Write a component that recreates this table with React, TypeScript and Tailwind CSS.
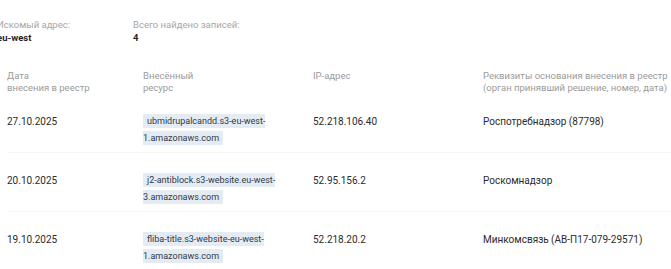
import React from "react";

const rows = [
  {
    date: "27.10.2025",
    res1: "ubmidrupalcandd.s3-eu-west-",
    res2: "1.amazonaws.com",
    ip: "52.218.106.40",
    org: "Роспотребнадзор (87798)",
  },
  {
    date: "20.10.2025",
    res1: "j2-antiblock.s3-website.eu-west-",
    res2: "3.amazonaws.com",
    ip: "52.95.156.2",
    org: "Роскомнадзор",
  },
  {
    date: "19.10.2025",
    res1: "fliba-title.s3-website-eu-west-",
    res2: "1.amazonaws.com",
    ip: "52.218.20.2",
    org: "Минкомсвязь (АВ-П17-079-29571)",
  },
];

export default function App() {
  return (
    <div
      className="w-[671px] h-[269px] overflow-hidden bg-white text-[#2b2b2b]"
      style={{ fontFamily: "Roboto, 'Noto Sans', sans-serif" }}
    >
      <div className="flex pt-[18px] ml-[-3px]">
        <div className="w-[136px]">
          <div className="text-[9.5px] leading-[13px] text-[#a6a6a6]">Искомый адрес:</div>
          <div className="text-[9.5px] leading-[13px] font-bold text-[#1f1f1f]">eu-west</div>
        </div>
        <div>
          <div className="text-[9.5px] leading-[13px] text-[#a6a6a6]">Всего найдено записей:</div>
          <div className="text-[9.5px] leading-[13px] font-bold text-[#1f1f1f]">4</div>
        </div>
      </div>

      <div className="mt-[26px] pl-[7px]">
        <div className="grid grid-cols-[136px_170px_170px_1fr] text-[9.5px] leading-[12px] text-[#9a9a9a] whitespace-nowrap">
          <div>
            Дата
            <br />
            внесения в реестр
          </div>
          <div>
            Внесённый
            <br />
            ресурс
          </div>
          <div>IP-адрес</div>
          <div>
            Реквизиты основания внесения в реестр
            <br />
            (орган принявший решение, номер, дата)
          </div>
        </div>

        {rows.map((r) => (
          <div
            key={r.date}
            className="grid grid-cols-[136px_170px_170px_1fr] h-[59px] pt-[19px] border-b border-[#f5f5f5] text-[10px] leading-[17px] whitespace-nowrap"
          >
            <div>{r.date}</div>
            <div className="text-[#2f3a48] text-[9px]">
              <span className="bg-[#e4ebf3] pl-[4px] pr-[4px] py-[2px] [box-decoration-break:slice]">
                {r.res1}
                <br />
                {r.res2}
              </span>
            </div>
            <div>{r.ip}</div>
            <div>{r.org}</div>
          </div>
        ))}
      </div>
    </div>
  );
}
